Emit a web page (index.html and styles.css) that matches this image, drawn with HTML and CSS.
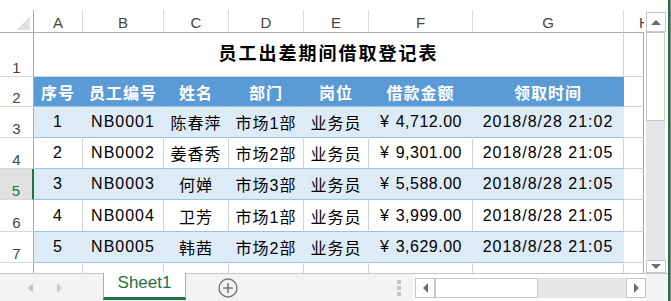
FILE: index.html
```html
<!DOCTYPE html>
<html lang="zh-CN">
<head>
  <meta charset="UTF-8" />
  <meta name="viewport" content="width=device-width, initial-scale=1.0" />
  <title>员工出差期间借取登记表</title>
  <link rel="stylesheet" href="styles.css">
</head>
<body>
<div class="window">
  <div class="workspace">
    <div class="main">
      <div class="sheet">
        <!-- column letters -->
        <div class="corner"></div>
        <div class="colhead">A</div>
        <div class="colhead">B</div>
        <div class="colhead">C</div>
        <div class="colhead">D</div>
        <div class="colhead">E</div>
        <div class="colhead">F</div>
        <div class="colhead">G</div>
        <div class="colhead clip">H</div>

        <!-- row 1: merged title -->
        <div class="rowhead">1</div>
        <div class="title">员工出差期间借取登记表</div>
        <div class="hcell"></div>

        <!-- row 2: table header -->
        <div class="rowhead">2</div>
        <div class="th">序号</div>
        <div class="th">员工编号</div>
        <div class="th">姓名</div>
        <div class="th">部门</div>
        <div class="th">岗位</div>
        <div class="th">借款金额</div>
        <div class="th">领取时间</div>
        <div class="hcell"></div>

        <div class="rowhead">3</div>
        <div class="td band">1</div>
        <div class="td band">NB0001</div>
        <div class="td band">陈春萍</div>
        <div class="td band">市场1部</div>
        <div class="td band">业务员</div>
        <div class="td band money"><span>¥</span><span>4,712.00</span></div>
        <div class="td band">2018/8/28 21:02</div>
        <div class="hcell"></div>

        <div class="rowhead">4</div>
        <div class="td">2</div>
        <div class="td">NB0002</div>
        <div class="td">姜香秀</div>
        <div class="td">市场2部</div>
        <div class="td">业务员</div>
        <div class="td money"><span>¥</span><span>9,301.00</span></div>
        <div class="td">2018/8/28 21:05</div>
        <div class="hcell"></div>

        <div class="rowhead sel">5</div>
        <div class="td band">3</div>
        <div class="td band">NB0003</div>
        <div class="td band">何婵</div>
        <div class="td band">市场3部</div>
        <div class="td band">业务员</div>
        <div class="td band money"><span>¥</span><span>5,588.00</span></div>
        <div class="td band">2018/8/28 21:05</div>
        <div class="hcell"></div>

        <div class="rowhead">6</div>
        <div class="td">4</div>
        <div class="td">NB0004</div>
        <div class="td">卫芳</div>
        <div class="td">市场1部</div>
        <div class="td">业务员</div>
        <div class="td money"><span>¥</span><span>3,999.00</span></div>
        <div class="td">2018/8/28 21:05</div>
        <div class="hcell"></div>

        <div class="rowhead">7</div>
        <div class="td band">5</div>
        <div class="td band">NB0005</div>
        <div class="td band">韩茜</div>
        <div class="td band">市场2部</div>
        <div class="td band">业务员</div>
        <div class="td band money"><span>¥</span><span>3,629.00</span></div>
        <div class="td band">2018/8/28 21:05</div>
        <div class="hcell"></div>

        <!-- row 8, cut off by the tab bar -->
        <div class="rowhead cut"></div>
        <div class="td blank"></div>
        <div class="td blank"></div>
        <div class="td blank"></div>
        <div class="td blank"></div>
        <div class="td blank"></div>
        <div class="td blank"></div>
        <div class="td blank"></div>
        <div class="hcell cut"></div>
      </div>

      <div class="vscroll">
        <div class="sb-btn up"></div>
        <div class="sb-thumb"></div>
        <div class="sb-track"></div>
        <div class="sb-btn down"></div>
      </div>
    </div>

    <div class="tabbar">
      <div class="tab-nav"><span class="nav-arrow prev"></span><span class="nav-arrow next"></span></div>
      <div class="tab">Sheet1</div>
      <div class="add-sheet">
        <svg width="20" height="20" viewBox="0 0 20 20">
          <circle cx="10" cy="10" r="9" fill="none" stroke="#777" stroke-width="1.4"/>
          <path d="M10 5v10M5 10h10" stroke="#777" stroke-width="1.6"/>
        </svg>
      </div>
      <div class="spacer"></div>
      <div class="split"><i></i><i></i><i></i></div>
      <div class="hscroll">
        <div class="sb-btn left"></div>
        <div class="sb-thumb"></div>
        <div class="sb-track"></div>
        <div class="sb-btn right"></div>
      </div>
      <div class="tail"></div>
    </div>
  </div>
  <div class="edge"></div>
</div>
</body>
</html>
```

FILE: styles.css
```css
body { margin: 0; font-family: "Liberation Sans", "Noto Sans CJK SC", sans-serif; background: #fff; color: #000; }
.window { display: flex; width: 671px; height: 301px; overflow: hidden; }
.workspace { width: 668px; display: flex; flex-direction: column; }
.main { display: flex; height: 273px; overflow: hidden; }

/* grid */
.sheet { width: 644px; padding-top: 10px; display: grid; grid-template-columns: 34px 49px 81px 65px 75px 65px 104px 151px 20px; grid-template-rows: 23px 44px 30px 31px 31px 31px 32px 31px 10px; }
.sheet > div { box-sizing: border-box; display: flex; align-items: center; justify-content: center; white-space: nowrap; }
.corner { border-right: 1px solid #ababab; border-bottom: 1px solid #ababab; background: linear-gradient(135deg, transparent 50%, #dfdfdf 50%) no-repeat right 3px bottom 2px / 14px 14px; }
.colhead { border-right: 1px solid #dadada; border-bottom: 1px solid #ababab; color: #444; font-size: 15px; line-height: 17px; padding-top: 3px; }
.sheet > .colhead.clip { border-right: 0; justify-content: flex-start; padding-left: 15px; overflow: hidden; }
.sheet > .rowhead { border-right: 1px solid #ababab; border-bottom: 1px solid #dadada; color: #444; font-size: 15px; line-height: 17px; align-items: flex-end; }
.rowhead.sel { background: #e1e1e1; color: #217346; border-right: 2px solid #217346; }
.rowhead.cut { border-bottom: 0; }

.sheet > .title { grid-column: span 7; border-right: 1px solid #d4d4d4; border-bottom: 1px solid #d4d4d4; font-size: 18px; font-weight: bold; letter-spacing: 2px; line-height: 18px; align-items: flex-end; padding-bottom: 13px; }
.th { background: #5b9bd5; color: #fff; font-size: 16px; font-weight: bold; letter-spacing: 1px; border-right: 1px solid #5b9bd5; border-bottom: 1px solid #9bc2e6; }
.td { font-size: 16px; letter-spacing: 1px; border-right: 1px solid #d4d4d4; border-bottom: 1px solid #9bc2e6; }
.td.band { background: #ddebf7; border-right-color: #ddebf7; }
.td.blank { border-bottom: 0; }
.sheet > .money { justify-content: space-between; padding: 0 10px 0 11px; letter-spacing: 0.5px; }
.hcell { border-right: 1px solid #a6a6a6; border-bottom: 1px solid #d4d4d4; }
.hcell.cut { border-bottom: 0; }

/* scroll bars */
.vscroll { width: 24px; box-sizing: border-box; padding: 12px 3px 0 2px; display: flex; flex-direction: column; }
.sb-btn { flex: none; width: 20px; height: 20px; box-sizing: border-box; border: 1px solid #c6c6c6; background: #fff; display: flex; align-items: center; justify-content: center; }
.sb-btn::after { content: ""; border: 4px solid transparent; }
.sb-btn.up::after { border-top: 0; border-left-width: 5px; border-right-width: 5px; border-bottom: 5px solid #6d6d6d; }
.sb-btn.down { height: 13px; align-items: flex-start; padding-top: 3px; }
.sb-btn.down::after { border-bottom: 0; border-left-width: 5px; border-right-width: 5px; border-top: 5px solid #6d6d6d; }
.sb-btn.left::after { border-left: 0; border-top-width: 5px; border-bottom-width: 5px; border-right: 5px solid #6d6d6d; }
.sb-btn.right::after { border-right: 0; border-top-width: 5px; border-bottom-width: 5px; border-left: 5px solid #6d6d6d; }
.sb-thumb { flex: none; box-sizing: border-box; border: 1px solid #c6c6c6; background: #fff; }
.vscroll .sb-thumb { height: 89px; }
.vscroll .sb-track { height: 139px; background: #e6e6e6; }

/* sheet tabs */
.tabbar { height: 28px; box-sizing: border-box; border-top: 1px solid #c6c6c6; background: #f3f3f3; display: flex; }
.tab-nav { width: 103px; box-sizing: border-box; padding: 9px 0 0 28px; display: flex; align-items: flex-start; gap: 24px; }
.nav-arrow { width: 0; height: 0; border-top: 5px solid transparent; border-bottom: 5px solid transparent; }
.nav-arrow.prev { border-right: 5px solid #c6c6c6; }
.nav-arrow.next { border-left: 5px solid #c6c6c6; }
.tab { width: 83px; height: 27px; margin-top: -1px; box-sizing: border-box; border: 1px solid #ababab; border-top: 0; border-bottom: 3px solid #217346; background: #fff; color: #217346; font-size: 17px; line-height: 20px; text-align: center; }
.add-sheet { width: 20px; height: 20px; margin: 4px 0 0 32px; }
.add-sheet svg { display: block; }
.spacer { flex: 1; }
.split { width: 18px; box-sizing: border-box; padding: 6px 0 0 2px; display: flex; flex-direction: column; gap: 2px; }
.split i { display: block; width: 4px; height: 4px; background: #c6c6c6; }
.hscroll { width: 233px; box-sizing: border-box; padding: 4px 0 0 2px; background: #fff; display: flex; align-items: flex-start; }
.hscroll .sb-thumb { width: 103px; height: 20px; }
.hscroll .sb-track { flex: 1; height: 20px; background: #e6e6e6; }
.tail { width: 22px; }

.edge { width: 3px; background: linear-gradient(to right, #217346 0 2px, #8a8a8a 2px); }
```
